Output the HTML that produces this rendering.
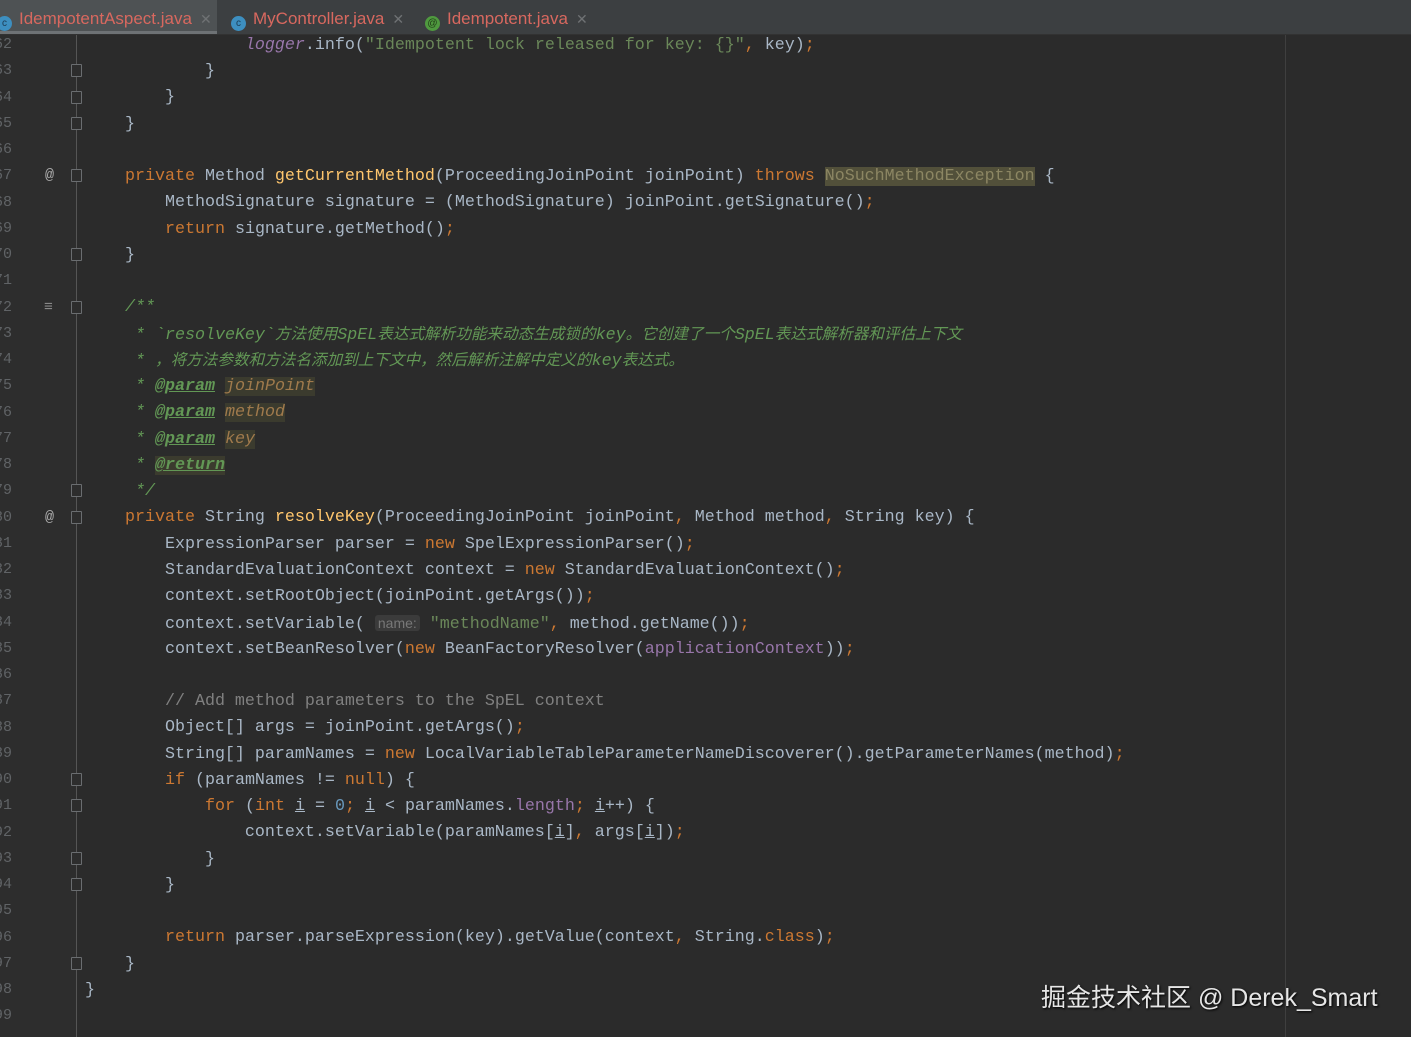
<!DOCTYPE html>
<html><head><meta charset="utf-8"><style>
body{margin:0;width:1411px;height:1037px;background:#2b2b2b;overflow:hidden;position:relative;font-family:"Liberation Mono","Noto Sans CJK SC",monospace}
.tabs{position:absolute;left:0;top:0;width:1411px;height:34px;background:#3c3f41;border-bottom:1px solid #323232;font-family:"Liberation Sans","Noto Sans CJK SC",sans-serif;font-size:17px}
.tab{position:absolute;top:0;height:34px;line-height:37px;color:#d8685f}
.tab.act{background:#4e5254;border-bottom:3px solid #6e7275;height:31px}
.ic{display:inline-block;width:15px;height:15px;border-radius:50%;background:#3d8fc0;color:#1c3b52;font-size:10px;line-height:15px;text-align:center;vertical-align:-2px;margin-right:7px}
.x{color:#6f7274;margin-left:8px;font-size:14px}
.gut{position:absolute;left:0;top:35px;width:76px;height:1002px;background:#2d2d2d;border-right:1px solid #555}
.ln{position:absolute;left:-6px;color:#606366;font-size:15px}
.fold{position:absolute;left:71px;width:9px;height:11px;border:1px solid #6a6d70;border-radius:1px;background:#2d2d2d}
.margin{position:absolute;left:1285px;top:35px;width:1px;height:1002px;background:#3f3f3f}
.l{position:absolute;left:85px;white-space:pre;font-size:16.67px;color:#a9b7c6;height:26px;line-height:26px;margin-top:2px}
.k{color:#cc7832}.s{color:#6a8759}.m{color:#ffc66d}.c{color:#808080}.d{color:#629755;font-style:italic}.n{color:#6897bb}.f{color:#9876aa}
.cj{font-size:15.6px}
.dt{color:#629755;text-decoration:underline;font-weight:bold;font-style:italic}.dp{color:#a07a4c;font-style:italic;background:#3b3b2e}
.hl{background:#52503a;color:#8c8663}
.hint{color:#787878;background:#3b3b3b;font-family:"Liberation Sans",sans-serif;font-size:14px;border-radius:3px;padding:0 3px}
.wm{position:absolute;left:1041px;top:978px;font-family:"Liberation Sans","Noto Sans CJK SC",sans-serif;font-size:25px;color:#e6e6e6;text-shadow:1px 1px 2px #000}
</style></head><body>
<div class="tabs">
<div class="tab act" style="left:0;width:217px"><span class="ic" style="margin-left:-3px">c</span>IdempotentAspect.java<span class="x">✕</span></div>
<div class="tab" style="left:231px"><span class="ic">c</span>MyController.java<span class="x">✕</span></div>
<div class="tab" style="left:425px"><span class="ic" style="background:#4f9a3f;color:#1f3a16">@</span>Idempotent.java<span class="x">✕</span></div>
</div>
<div class="gut"></div>
<div class="margin"></div>
<div id="g"></div>
<div class="l" style="top:31px">                <span class="f" style="font-style:italic">logger</span>.info(<span class="s">"Idempotent lock released for key: {}"</span><span class="k">,</span> key)<span class="k">;</span></div>
<div class="l" style="top:57px">            }</div>
<div class="l" style="top:83px">        }</div>
<div class="l" style="top:110px">    }</div>
<div class="l" style="top:162px">    <span class="k">private</span> Method <span class="m">getCurrentMethod</span>(ProceedingJoinPoint joinPoint) <span class="k">throws</span> <span class="hl">NoSuchMethodException</span> {</div>
<div class="l" style="top:188px">        MethodSignature signature = (MethodSignature) joinPoint.getSignature()<span class="k">;</span></div>
<div class="l" style="top:215px">        <span class="k">return</span> signature.getMethod()<span class="k">;</span></div>
<div class="l" style="top:241px">    }</div>
<div class="l" style="top:293px">    <span class="d">/**</span></div>
<div class="l" style="top:320px">     <span class="d">* `resolveKey`<span class="cj">方法使用</span>SpEL<span class="cj">表达式解析功能来动态生成锁的</span>key<span class="cj">。它创建了一个</span>SpEL<span class="cj">表达式解析器和评估上下文</span></span></div>
<div class="l" style="top:346px">     <span class="d">* <span class="cj">，将方法参数和方法名添加到上下文中，然后解析注解中定义的</span>key<span class="cj">表达式。</span></span></div>
<div class="l" style="top:372px">     <span class="d">* </span><span class="dt">@param</span> <span class="dp">joinPoint</span></div>
<div class="l" style="top:398px">     <span class="d">* </span><span class="dt">@param</span> <span class="dp">method</span></div>
<div class="l" style="top:425px">     <span class="d">* </span><span class="dt">@param</span> <span class="dp">key</span></div>
<div class="l" style="top:451px">     <span class="d">* </span><span class="dt" style="background:#3b3b2e">@return</span></div>
<div class="l" style="top:477px">     <span class="d">*/</span></div>
<div class="l" style="top:503px">    <span class="k">private</span> String <span class="m">resolveKey</span>(ProceedingJoinPoint joinPoint<span class="k">,</span> Method method<span class="k">,</span> String key) {</div>
<div class="l" style="top:530px">        ExpressionParser parser = <span class="k">new</span> SpelExpressionParser()<span class="k">;</span></div>
<div class="l" style="top:556px">        StandardEvaluationContext context = <span class="k">new</span> StandardEvaluationContext()<span class="k">;</span></div>
<div class="l" style="top:582px">        context.setRootObject(joinPoint.getArgs())<span class="k">;</span></div>
<div class="l" style="top:608px">        context.setVariable( <span class="hint">name:</span> <span class="s">"methodName"</span><span class="k">,</span> method.getName())<span class="k">;</span></div>
<div class="l" style="top:635px">        context.setBeanResolver(<span class="k">new</span> BeanFactoryResolver(<span class="f">applicationContext</span>))<span class="k">;</span></div>
<div class="l" style="top:687px">        <span class="c">// Add method parameters to the SpEL context</span></div>
<div class="l" style="top:713px">        Object[] args = joinPoint.getArgs()<span class="k">;</span></div>
<div class="l" style="top:740px">        String[] paramNames = <span class="k">new</span> LocalVariableTableParameterNameDiscoverer().getParameterNames(method)<span class="k">;</span></div>
<div class="l" style="top:766px">        <span class="k">if</span> (paramNames != <span class="k">null</span>) {</div>
<div class="l" style="top:792px">            <span class="k">for</span> (<span class="k">int</span> <u>i</u> = <span class="n">0</span><span class="k">;</span> <u>i</u> &lt; paramNames.<span class="f">length</span><span class="k">;</span> <u>i</u>++) {</div>
<div class="l" style="top:818px">                context.setVariable(paramNames[<u>i</u>]<span class="k">,</span> args[<u>i</u>])<span class="k">;</span></div>
<div class="l" style="top:845px">            }</div>
<div class="l" style="top:871px">        }</div>
<div class="l" style="top:923px">        <span class="k">return</span> parser.parseExpression(key).getValue(context<span class="k">,</span> String.<span class="k">class</span>)<span class="k">;</span></div>
<div class="l" style="top:950px">    }</div>
<div class="l" style="top:976px">}</div>
<div class="wm">掘金技术社区 @ Derek_Smart</div>
<script>
var g=document.getElementById('g'),h='';
for(var i=0;i<38;i++){var y=36+i*26.25;h+='<div class="ln" style="top:'+y+'px">'+(62+i)+'</div>';}
[63,64,65,67,70,72,79,80,90,91,93,94,97].forEach(function(n){var y=37+(n-62)*26.25+1;h+='<div class="fold" style="top:'+y+'px"></div>';});
h+='<div class="ln" style="left:45px;top:'+(36+5*26.25)+'px;color:#aaa">@</div>';
h+='<div class="ln" style="left:45px;top:'+(36+18*26.25)+'px;color:#aaa">@</div>';
h+='<div class="ln" style="left:44px;top:'+(36+10*26.25)+'px;color:#888">≡</div>';
g.innerHTML=h;
</script>
</body></html>
